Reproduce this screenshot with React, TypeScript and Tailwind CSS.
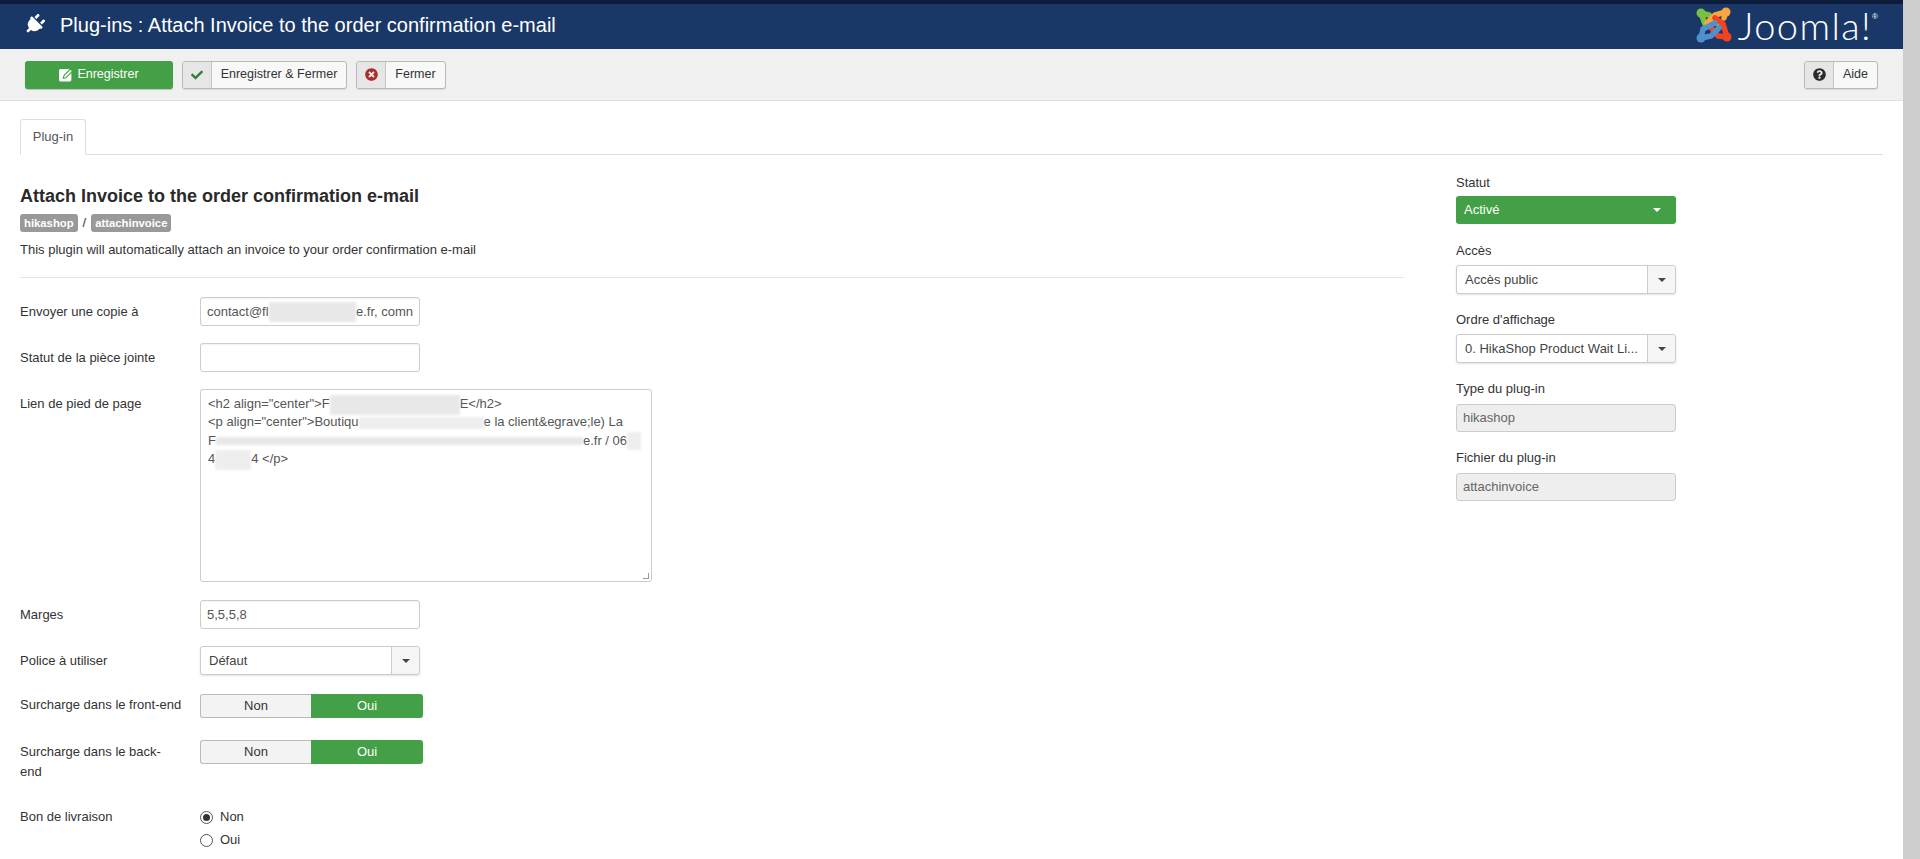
import React from 'react';
import { FaPlug, FaCheck, FaTimesCircle, FaQuestionCircle } from 'react-icons/fa';

function Caret({ white }: { white?: boolean }) {
  return (
    <span
      className={`w-0 h-0 border-x-[4px] border-x-transparent border-t-[4px] ${white ? 'border-t-white' : 'border-t-[#444]'}`}
    />
  );
}

function JoomlaMark() {
  return (
    <svg width="38" height="38" viewBox="0 0 38 38" fill="none" strokeWidth="5.5" strokeLinecap="round">
      <path d="M6 7 L10 18 M6 7 L14 9 L24 19" stroke="#7ac143" />
      <circle cx="6" cy="7" r="4.5" fill="#7ac143" />
      <path d="M31 6 L20 9 L12 17 M31 6 L29 12" stroke="#f9a541" />
      <circle cx="31" cy="6" r="4.5" fill="#f9a541" />
      <path d="M32 31 L28 18 L20 12 M32 31 L23 30 L17 23" stroke="#f44321" />
      <circle cx="32" cy="31" r="4.5" fill="#f44321" />
      <path d="M6 32 L8 23 L20 17 M6 32 L16 30 L24 22" stroke="#5091cd" />
      <circle cx="6" cy="32" r="4.5" fill="#5091cd" />
    </svg>
  );
}

function SaveIcon() {
  return (
    <svg width="14" height="14" viewBox="0 0 13 13">
      <rect x="0" y="1" width="11.5" height="11.5" rx="1.5" fill="#fff" />
      <path d="M4 9.5 L4.6 7 L10.5 1 L12.6 3 L6.5 9 Z" fill="#fff" stroke="#43a047" strokeWidth="1" />
    </svg>
  );
}

function ToolButton({ icon, label, width }: { icon: React.ReactNode; label: string; width: string }) {
  return (
    <button className={`flex h-[28px] ${width} border border-[#b9b9b9] rounded-[3px] bg-[#f8f8f8] text-[#333] text-[12.5px] shadow-[0_1px_1px_rgba(0,0,0,0.1)] overflow-hidden`}>
      <span className="w-[29px] h-full flex items-center justify-center bg-[#e6e6e6] border-r border-[#c4c4c4] shrink-0">
        {icon}
      </span>
      <span className="flex-1 h-full flex items-center justify-center">{label}</span>
    </button>
  );
}

function Label({ children, top = 'pt-[5px]' }: { children: React.ReactNode; top?: string }) {
  return <label className={`w-[180px] shrink-0 pr-[12px] text-[#333] leading-[20px] ${top}`}>{children}</label>;
}

function Toggle() {
  return (
    <div className="flex w-[223px] h-[24px] text-[13px]">
      <span className="w-[111px] flex items-center justify-center bg-[#f3f3f3] border border-[#bbb] border-r-0 rounded-l-[3px] text-[#333]">Non</span>
      <span className="flex-1 flex items-center justify-center bg-[#43a047] rounded-r-[3px] text-white">Oui</span>
    </div>
  );
}

function Radio({ checked, label }: { checked?: boolean; label: string }) {
  return (
    <div className="flex items-center h-[20px]">
      <span className="w-[13px] h-[13px] rounded-full border border-[#555] flex items-center justify-center mr-[7px] bg-white">
        {checked && <span className="w-[7px] h-[7px] rounded-full bg-[#333]" />}
      </span>
      <span className="text-[#333]">{label}</span>
    </div>
  );
}

function Select({ text, className }: { text: string; className: string }) {
  return (
    <div className={`flex h-[29px] border border-[#ccc] rounded-[3px] bg-white shadow-[0_1px_2px_rgba(0,0,0,0.12)] ${className}`}>
      <span className="flex-1 min-w-0 pl-[8px] flex items-center text-[#444] whitespace-nowrap overflow-hidden">{text}</span>
      <span className="w-[28px] shrink-0 flex items-center justify-center bg-[#f5f5f5] border-l border-[#ccc] rounded-r-[3px]">
        <Caret />
      </span>
    </div>
  );
}

function Blur({ w, h = 'h-[18px]', light }: { w: string; h?: string; light?: boolean }) {
  return <span className={`inline-block align-middle -my-[6px] ${w} ${h} ${light ? 'bg-[#eeeeee]' : 'bg-[#e8e8e8]'} blur-[1px]`} />;
}

const inputCls = 'h-[29px] w-[220px] border border-[#ccc] rounded-[3px] bg-white px-[6px] flex items-center text-[#555] shadow-[inset_0_1px_1px_rgba(0,0,0,0.05)]';
const readonlyCls = 'h-[28px] border border-[#ccc] rounded-[3px] bg-[#eeeeee] px-[6px] flex items-center text-[#666]';

export default function App() {
  return (
    <div className="flex h-[859px] overflow-hidden bg-white text-[13px] font-['Liberation_Sans',Arial,sans-serif]">
      <div className="flex-1 min-w-0">
        <header className="h-[49px] bg-[#1a3867] border-t-[4px] border-[#0c1c3a] flex items-center pl-[24px] pr-[25px] text-white">
          <FaPlug className="w-[21px] h-[21px] mr-[15px] -mt-[4px] rotate-45" />
          <h1 className="text-[20px] -mt-[3px] font-normal">Plug-ins : Attach Invoice to the order confirmation e-mail</h1>
          <div className="ml-auto flex items-center -mt-[3px]">
            <JoomlaMark />
            <span className="ml-[5px] text-[38px] leading-[40px] font-light tracking-[1.4px] font-['Lato',sans-serif]">Joomla!</span>
            <span className="text-[8px] self-start mt-[6px]">®</span>
          </div>
        </header>

        <div className="h-[52px] bg-[#f0f0f0] border-b border-[#e1e1e1] flex items-center pl-[25px] pr-[25px] gap-[9px]">
          <button className="w-[148px] h-[28px] rounded-[3px] bg-[#43a047] text-white text-[12.5px] flex items-center justify-center gap-[4px] shadow-[0_1px_1px_rgba(0,0,0,0.2)]">
            <SaveIcon />
            Enregistrer
          </button>
          <ToolButton width="w-[165px]" label="Enregistrer & Fermer" icon={<FaCheck className="w-[12px] h-[12px] text-[#378137]" />} />
          <ToolButton width="w-[90px]" label="Fermer" icon={<FaTimesCircle className="w-[13px] h-[13px] text-[#a9302a]" />} />
          <div className="ml-auto">
            <ToolButton width="w-[74px]" label="Aide" icon={<FaQuestionCircle className="w-[13px] h-[13px] text-[#2b2b2b]" />} />
          </div>
        </div>

        <div className="pl-[20px] pr-[20px] mt-[18px]">
          <div className="h-[36px] border-b border-[#ddd] flex">
            <div className="w-[66px] h-[36px] border border-[#ddd] border-b-white rounded-t-[3px] bg-white flex items-center justify-center text-[#555] text-[13px]">
              Plug-in
            </div>
          </div>

          <div className="flex">
            <div className="w-[1384px] shrink-0">
              <h2 className="mt-[30px] text-[18px] leading-[22px] font-bold text-[#2a2a2a]">Attach Invoice to the order confirmation e-mail</h2>
              <div className="mt-[7px] flex items-center h-[18px] text-[#333]">
                <span className="h-[18px] px-[4px] rounded-[3px] bg-[#999] text-white text-[11.3px] font-bold flex items-center">hikashop</span>
                <span className="mx-[5px]">/</span>
                <span className="h-[18px] px-[4px] rounded-[3px] bg-[#999] text-white text-[11.3px] font-bold flex items-center">attachinvoice</span>
              </div>
              <p className="mt-[8px] leading-[20px] text-[#333]">This plugin will automatically attach an invoice to your order confirmation e-mail</p>
              <div className="mt-[17px] h-px bg-[#e5e5e5]" />

              <div className="mt-[19px] flex items-start">
                <Label>Envoyer une copie à</Label>
                <div className={inputCls + ' overflow-hidden whitespace-nowrap'}>
                  contact@fl<Blur w="w-[94px]" h="h-[20px]" />e.fr, comn
                </div>
              </div>
              <div className="mt-[17px] flex items-start">
                <Label>Statut de la pièce jointe</Label>
                <div className={inputCls} />
              </div>
              <div className="mt-[17px] flex items-start">
                <Label>Lien de pied de page</Label>
                <div className="relative w-[452px] h-[193px] border border-[#ccc] rounded-[3px] bg-white pl-[7px] pr-[5px] pt-[5px] text-[#555] leading-[18.4px] whitespace-nowrap overflow-hidden">
                  <div>&lt;h2 align="center"&gt;F<Blur w="w-[130px]" h="h-[20px]" />E&lt;/h2&gt;</div>
                  <div>&lt;p align="center"&gt;Boutiqu<Blur w="w-[125px]" h="h-[12px]" light />e la client&amp;egrave;le) La</div>
                  <div>F<Blur w="w-[367px]" h="h-[8px]" />e.fr / 06<Blur w="w-[14px]" light /></div>
                  <div>4<Blur w="w-[36px]" h="h-[20px]" light />4 &lt;/p&gt;</div>
                  <span className="absolute right-[2px] bottom-[2px] w-[6px] h-[6px] border-r border-b border-[#999]" />
                </div>
              </div>
              <div className="mt-[18px] flex items-start">
                <Label>Marges</Label>
                <div className={inputCls}>5,5,5,8</div>
              </div>
              <div className="mt-[17px] flex items-start">
                <Label>Police à utiliser</Label>
                <Select text="Défaut" className="w-[220px]" />
              </div>
              <div className="mt-[19px] flex items-start">
                <Label top="pt-[1px]">Surcharge dans le front-end</Label>
                <Toggle />
              </div>
              <div className="mt-[22px] flex items-start">
                <Label top="pt-[2px]">Surcharge dans le back-<br />end</Label>
                <Toggle />
              </div>
              <div className="mt-[25px] flex items-start">
                <Label top="pt-0">Bon de livraison</Label>
                <div className="flex flex-col gap-[3px]">
                  <Radio checked label="Non" />
                  <Radio label="Oui" />
                </div>
              </div>
            </div>

            <aside className="ml-[52px] w-[220px] shrink-0 pt-[18px]">
              <div className="leading-[20px] text-[#333]">Statut</div>
              <div className="mt-[3px] h-[28px] rounded-[3px] bg-[#43a047] text-white flex items-center justify-between pl-[8px] pr-[15px]">
                Activé
                <Caret white />
              </div>
              <div className="mt-[17px] leading-[20px] text-[#333]">Accès</div>
              <Select text="Accès public" className="mt-[4px]" />
              <div className="mt-[16px] leading-[20px] text-[#333]">Ordre d'affichage</div>
              <Select text="0. HikaShop Product Wait Li..." className="mt-[4px]" />
              <div className="mt-[16px] leading-[20px] text-[#333]">Type du plug-in</div>
              <div className={readonlyCls + ' mt-[5px]'}>hikashop</div>
              <div className="mt-[16px] leading-[20px] text-[#333]">Fichier du plug-in</div>
              <div className={readonlyCls + ' mt-[5px]'}>attachinvoice</div>
            </aside>
          </div>
        </div>
      </div>
      <div className="w-[17px] shrink-0 bg-[#cdcdcd]" />
    </div>
  );
}
